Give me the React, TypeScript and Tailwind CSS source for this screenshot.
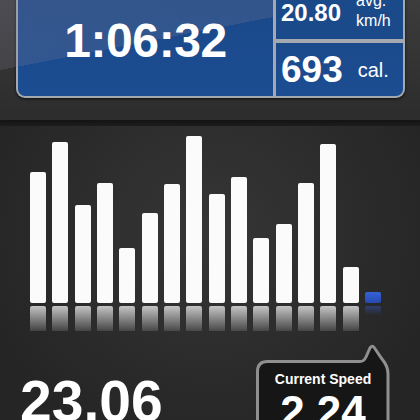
const bars = [131, 161, 98, 120, 55, 90, 119, 167, 109, 126, 65, 79, 120, 159, 36];

function Bubble() {
  return (
    <div className="relative w-[136px] h-[76px] mt-[13px] mr-[29px]">
      <svg className="absolute inset-0" width="136" height="76" viewBox="0 0 136 76">
        <path
          d="M 2.5 80 L 2.5 27.5 Q 2.5 17.5 12.5 17.5 L 105 17.5 Q 109 17.5 111 13 L 115 4 Q 117 0.5 119.5 4 L 127 15 Q 133 22 133 30 L 133 80"
          fill="#161616"
          stroke="#8f8f8f"
          strokeWidth="3"
        />
      </svg>
      <div className="relative flex flex-col items-center pt-[27.5px] text-white font-bold">
        <span className="text-[14px] leading-none">Current Speed</span>
        <span className="text-[44px] leading-none mt-[4px]">2.24</span>
      </div>
    </div>
  );
}

export default function App() {
  return (
    <div className="w-[420px] h-[420px] overflow-hidden flex flex-col bg-[#262626] font-['Liberation_Sans',Arial,sans-serif]">
      {/* HEADER */}
      <div className="relative h-[120px] shrink-0 bg-[linear-gradient(#3c3c3c,#2c2c2c)]">
        <div className="absolute left-0 top-0 h-full w-[273px] z-[5] bg-[linear-gradient(169deg,rgba(130,126,148,0.25)_0%,rgba(130,126,148,0.22)_40.5%,transparent_40.5%)]" />
        <div className="ml-4 -mt-[10px] w-[389px] h-[108px] flex gap-[3px] bg-[#a4a9af] px-[2px] pb-[2px] rounded-b-[9px] shadow-[0_1px_3px_rgba(0,0,0,0.7)]">
          <div className="w-[255px] bg-[linear-gradient(#1a4888,#1c4d92)] rounded-bl-[7px] flex items-center justify-center pb-[5px]">
            <span className="relative z-10 text-white font-bold text-[48px] leading-none tracking-[-0.4px]">1:06:32</span>
          </div>
          <div className="flex-1 flex flex-col gap-[4px]">
            <div className="h-[49px] bg-[#1b4a8b] flex items-start pl-[5px] pt-[11px] text-white">
              <span className="font-bold text-[24px] leading-none">20.80</span>
              <div className="ml-[15px] -mt-[10px] flex flex-col text-[16px] leading-[20px]">
                <span>avg.</span>
                <span>km/h</span>
              </div>
            </div>
            <div className="flex-1 bg-[linear-gradient(#1b4a8b,#1c4d92)] rounded-br-[7px] flex items-center pl-[5px] text-white">
              <span className="font-bold text-[37px] leading-none">693</span>
              <span className="ml-[15px] text-[20px] leading-none">cal.</span>
            </div>
          </div>
        </div>
      </div>

      <div className="h-[6px] shrink-0 bg-[linear-gradient(#131313,#1d1d1d)]" />

      {/* CHART */}
      <div className="flex-1 flex flex-col bg-[radial-gradient(ellipse_at_50%_35%,#363636,#252525_80%)]">
        <div className="h-[177px] flex items-end pl-[30px] gap-[6.34px]">
          {bars.map((h, i) => (
            <div key={i} className="w-[16px] bg-[#fbfbfb] rounded-[2px]" style={{ height: h }} />
          ))}
          <div className="w-[16px] h-[11px] bg-[linear-gradient(#3563d6,#2649b0)] rounded-[2px]" />
        </div>
        <div className="h-[25px] mt-[3px] flex items-start pl-[30px] gap-[6.34px]">
          {bars.map((_, i) => (
            <div
              key={i}
              className="w-[16px] h-[25px] rounded-t-[2px] bg-[linear-gradient(rgba(255,255,255,0.72),rgba(255,255,255,0.12))]"
            />
          ))}
          <div className="w-[16px] h-[9px] rounded-t-[2px] bg-[linear-gradient(rgba(50,90,200,0.45),rgba(50,90,200,0))]" />
        </div>

        {/* BOTTOM */}
        <div className="flex items-start justify-between">
          <span className="ml-[20px] mt-[41.5px] text-white font-bold text-[57px] leading-none">23.06</span>
          <Bubble />
        </div>
      </div>
    </div>
  );
}
